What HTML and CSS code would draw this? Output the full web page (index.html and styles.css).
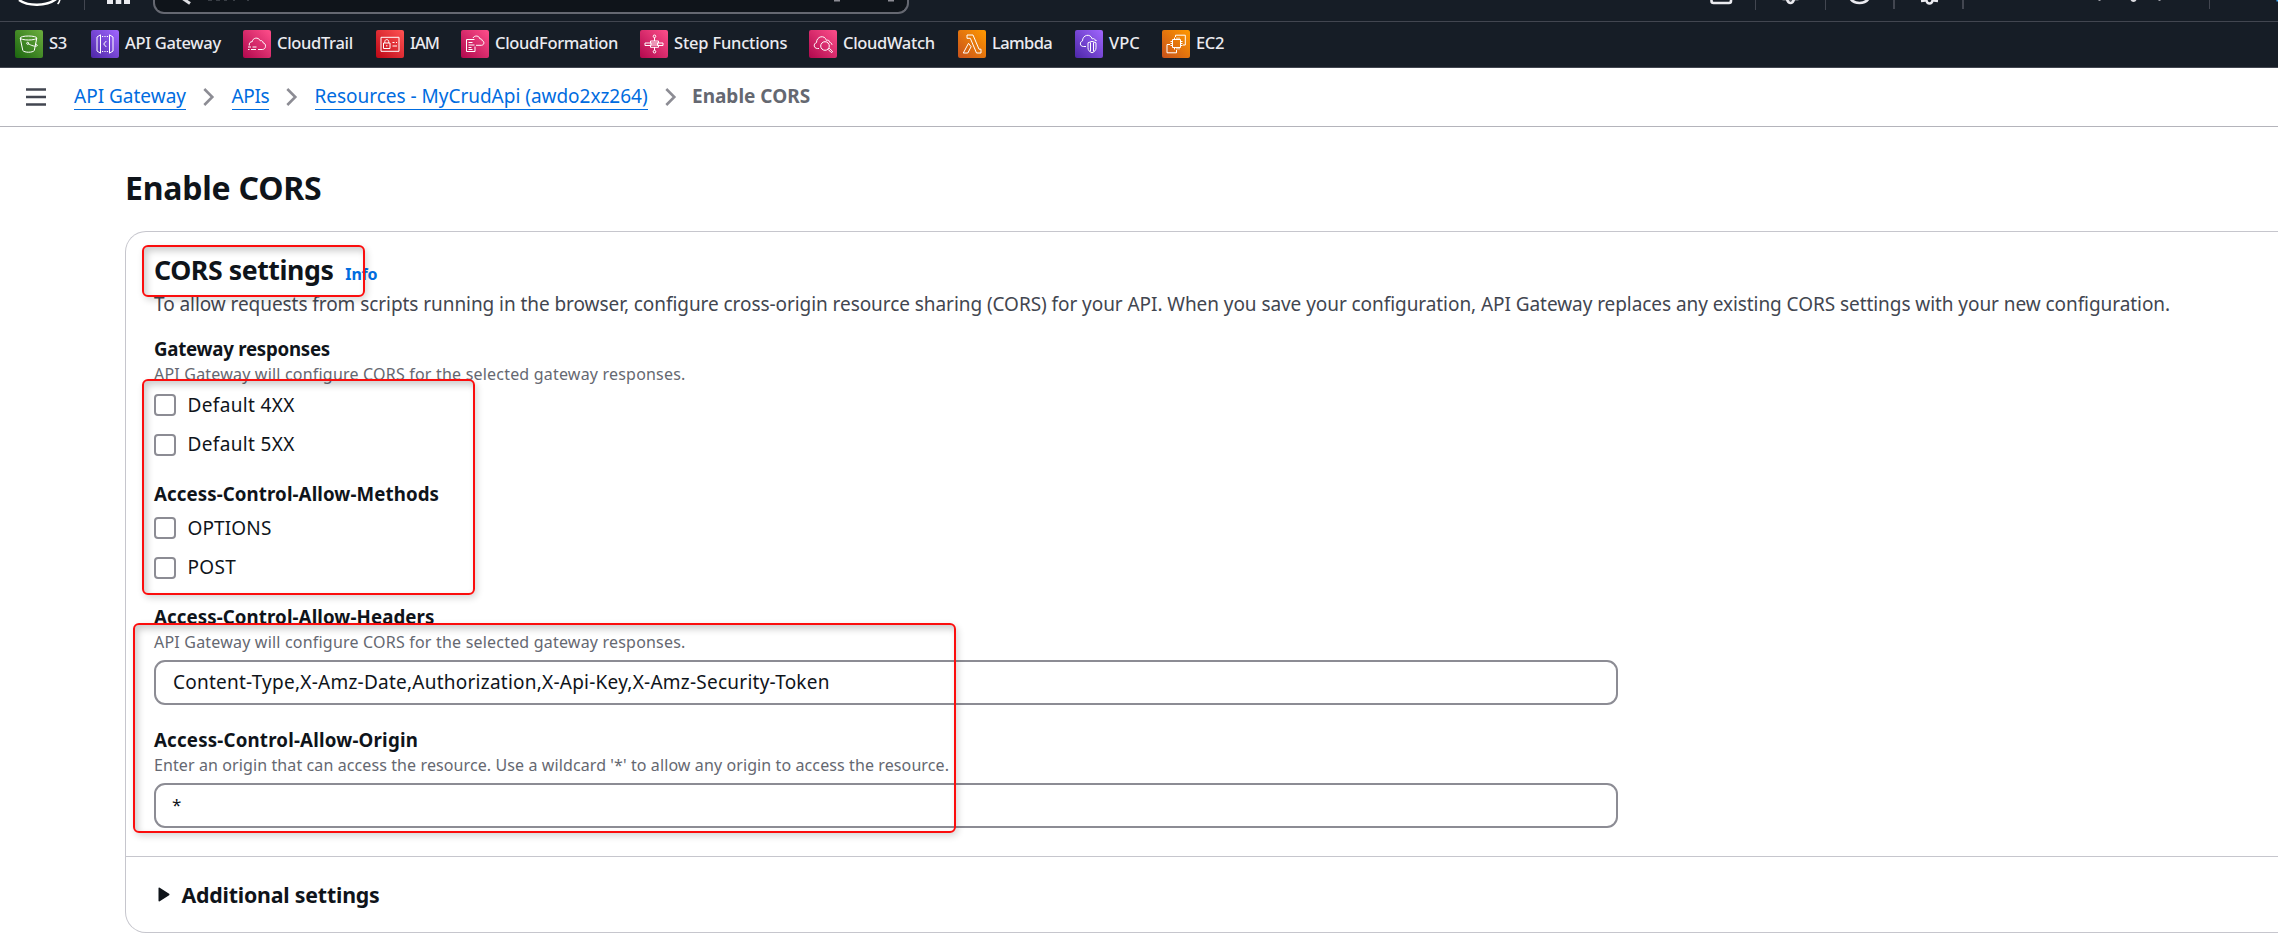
FILE: index.html
```
<!DOCTYPE html>
<html lang="en">
<head>
<meta charset="utf-8">
<title>Enable CORS - API Gateway</title>
<link rel="stylesheet" href="styles.css">
</head>
<body>
<header class="topbar">
  <div class="strip">
    <svg class="strip-left" width="153" height="21" viewBox="0 0 153 21" fill="none">
      <path d="M19 0c9 6.400 27 6.400 37-.8" stroke="#fff" stroke-width="2.400"/>
      <path d="M60 -1c-.3 2-1 3.600-2.400 5" stroke="#fff" stroke-width="1.600"/>
      <path d="M84.500 0v10" stroke="#424650"/>
      <path d="M107 0h6v4h-6zM115.700 0h5.600v4h-5.600zM124 0h6v4h-6z" fill="#ebebf0"/>
    </svg>
    <div class="search">
      <svg width="752" height="12" viewBox="0 0 752 12">
        <path d="M27-2l8 5.500" stroke="#dedee3" stroke-width="3"/>
        <path d="M53 0h4M61 0h4M69 0h3M78 0h2M92 0h2" stroke="#656871" stroke-width="1"/>
        <path d="M679 0h6v1.500h-6zM733 0h6v1.500h-6z" fill="#8c8c94"/>
      </svg>
    </div>
    <svg class="strip-right" width="578" height="21" viewBox="1700 0 578 21" fill="none">
      <path d="M1711.500-2v3q0 2 2 2h15.500q2 0 2-2v-3" stroke="#ebebf0" stroke-width="2.600"/>
      <path d="M1755.500 0v10M1825.500 0v10M2209.500 0v9" stroke="#424650"/>
      <path d="M1894 0v9M1963 0v9" stroke="#424650" stroke-width="2"/>
      <path d="M1782.500 0h16" stroke="#656871" stroke-width="1.500"/>
      <path d="M1787-1q1 4 3.500 4t3.500-4" stroke="#ebebf0" stroke-width="2.600"/>
      <path d="M1850-2q3 5 9.500 5t9.500-5" stroke="#ebebf0" stroke-width="2.600"/>
      <path d="M1921 1l4-.5 1.500 0q.5 3 3 3t3-3h1.500l4 .5" stroke="#ebebf0" stroke-width="2.400"/>
      <path d="M2098.500 0h2v1h-2zM2158.500 0h2v1h-2z" fill="#9a9ca3"/>
      <path d="M2130.500 0h6q-1 2-3 2t-3-2" fill="#dedee3"/>
      <path d="M2276.500 0h2v1.500h-2z" fill="#42b4ff"/>
    </svg>
  </div>
  <svg class="defs" width="0" height="0">
    <defs>
      <linearGradient id="green" x1="0" y1="1" x2="1" y2="0"><stop offset="0" stop-color="#1b660f"/><stop offset="1" stop-color="#6cae3e"/></linearGradient>
      <linearGradient id="purple" x1="0" y1="1" x2="1" y2="0"><stop offset="0" stop-color="#4d27a8"/><stop offset="1" stop-color="#a166ff"/></linearGradient>
      <linearGradient id="pink" x1="0" y1="1" x2="1" y2="0"><stop offset="0" stop-color="#b0084d"/><stop offset="1" stop-color="#ff4f8b"/></linearGradient>
      <linearGradient id="red" x1="0" y1="1" x2="1" y2="0"><stop offset="0" stop-color="#bd0816"/><stop offset="1" stop-color="#ff5252"/></linearGradient>
      <linearGradient id="orange" x1="0" y1="1" x2="1" y2="0"><stop offset="0" stop-color="#c8511b"/><stop offset="1" stop-color="#ff9900"/></linearGradient>
    </defs>
  </svg>
  <nav class="favorites">
    <a class="fav s3"><svg viewBox="0 0 28 28"><rect width="28" height="28" rx="2" fill="url(#green)"/><g><ellipse cx="13.500" cy="8" rx="8.300" ry="2"/><path d="M5.200 8l2.600 12.500c1.500 2.300 10 2.300 11.500 0L21.800 8M13 13.500c3 2 7.500 3.500 9.300 2.200 0-1-1-1.500-2-2"/><circle cx="12.700" cy="13.300" r="1"/></g></svg><span>S3</span></a>
    <a class="fav apigw"><svg viewBox="0 0 28 28"><rect width="28" height="28" rx="2" fill="url(#purple)"/><g><path d="M9.500 4.800L6 7v14l3.500 2.200zM18.500 4.800L22 7v14l-3.500 2.200zM15.300 11l-2.600 3 2.600 3"/><path d="M11 6.500h6.500M11 21.500h6.500" stroke-dasharray="1.200 1.200"/></g></svg><span>API Gateway</span></a>
    <a class="fav trail"><svg viewBox="0 0 28 28"><rect width="28" height="28" rx="2" fill="url(#pink)"/><g><path d="M6.300 15.500c-.5-2.500 1-3.800 3-3.900.2-3.600 5.900-5.200 8-.8 1.500-.7 2.600.5 2.800 2 3.400.5 3.300 6.700-.8 6.700H15"/><path d="M5 17h3M9.500 17h4M5 19.500h1.500M8 19.500h5"/></g></svg><span>CloudTrail</span></a>
    <a class="fav iam"><svg viewBox="0 0 28 28"><rect width="28" height="28" rx="2" fill="url(#red)"/><g><path d="M5 7.300h18v14H5zM7.500 13h6.500v5.500H7.500zM8.800 13v-1.500c0-2.500 3.900-2.500 3.900 0V13M10.800 15v1.500M16.500 12.500h2M20 12.500h1M16.500 16h4.500"/></g></svg><span>IAM</span></a>
    <a class="fav cfn"><svg viewBox="0 0 28 28"><rect width="28" height="28" rx="2" fill="url(#pink)"/><g><path d="M13.500 9.500h-8v12h8.500v-5M7.500 12.500h4M7.500 15h6M7.500 17.500h3M7.500 19.500h4"/><path d="M12 8c1.500-3 6.300-2.500 7 1 1.200-.5 2 .3 2 1.500 2.700.6 2.500 4.500-.5 4.800H15"/></g></svg><span>CloudFormation</span></a>
    <a class="fav sfn"><svg viewBox="0 0 28 28"><rect width="28" height="28" rx="2" fill="url(#pink)"/><g><circle cx="14.500" cy="6.300" r="1.300"/><circle cx="14.500" cy="21.700" r="1.300"/><path d="M14.500 7.600V11M14.500 17v3.400M10.500 11h8v2h-8zM5 13h6v2.500H5zM17.500 13h5.500v2.500h-5.500zM10.500 15h8v2.300h-8z"/></g></svg><span>Step Functions</span></a>
    <a class="fav watch"><svg viewBox="0 0 28 28"><rect width="28" height="28" rx="2" fill="url(#pink)"/><g><path d="M10 18.500H8.500c-4 0-4.300-5-1-5.900 0-6.300 8-8.300 10-2.200 1.800-.8 3 .2 3 1.800 1.500.4 2.400 1.300 2.500 2.600"/><circle cx="16" cy="16" r="4.300"/><path d="M19 19.300l3 3c1 .6 1.900-.5 1.200-1.300l-3-2.800"/></g></svg><span>CloudWatch</span></a>
    <a class="fav lambda"><svg viewBox="0 0 28 28"><rect width="28" height="28" rx="2" fill="url(#orange)"/><g><path d="M9 5h6l6 14.200h2V23h-4.500L12.300 8.300H9zM10.500 13.300L5.300 23h4.500l3.300-6.300z"/></g></svg><span>Lambda</span></a>
    <a class="fav vpc"><svg viewBox="0 0 28 28"><rect width="28" height="28" rx="2" fill="url(#purple)"/><g><path d="M11 16.500H8.500c-4 0-4-4.800-1-5.600 0-6 7.800-8 9.700-2 1.800-.8 3 .2 3 1.700h1.500"/><path d="M13 12.800l4-1.500 4 1.500v5c0 2.500-1.500 4-4 5-2.500-1-4-2.500-4-5zM15.500 12.500v9M18.500 12.500v9"/></g></svg><span>VPC</span></a>
    <a class="fav ec2"><svg viewBox="0 0 28 28"><rect width="28" height="28" rx="2" fill="url(#orange)"/><g><path d="M10.500 9.500h8v8h-8z"/><path d="M12.500 7.500v2M15 7.500v2M17 7.500v2M12.500 17.500v2M15 17.500v2M17 17.500v2M8.500 11.500h2M8.500 13.500h2M8.500 15.500h2M18.500 11.500h2M18.500 13.500h2M18.500 15.500h2"/><path d="M13.500 7V5.200h9.800v9.800H21M8 14.500H5v8.300h9.500V20"/></g></svg><span>EC2</span></a>
  </nav>
</header>
<div class="crumbbar">
  <svg class="burger" width="20" height="18" viewBox="0 0 20 18"><path d="M0 1.500h20M0 9h20M0 16.500h20" stroke="#424650" stroke-width="2.600"/></svg>
  <nav class="crumbs">
    <a class="c1"><span>API Gateway</span></a>
    <svg width="12" height="18" viewBox="0 0 12 18"><path d="M1.300 1l8 8-8 8"/></svg>
    <a class="c2"><span>APIs</span></a>
    <svg width="12" height="18" viewBox="0 0 12 18"><path d="M1.300 1l8 8-8 8"/></svg>
    <a class="c3"><span>Resources - MyCrudApi (awdo2xz264)</span></a>
    <svg width="12" height="18" viewBox="0 0 12 18"><path d="M1.300 1l8 8-8 8"/></svg>
    <strong>Enable CORS</strong>
  </nav>
</div>
<main>
  <h1>Enable CORS</h1>
  <section class="card">
    <div class="card-body">
      <div class="heading"><h2>CORS settings</h2><a class="info">Info</a></div>
      <p class="desc">To allow requests from scripts running in the browser, configure cross-origin resource sharing (CORS) for your API. When you save your configuration, API Gateway replaces any existing CORS settings with your new configuration.</p>
      <div class="field first">
        <div class="label l-gateway">Gateway responses</div>
        <div class="hint">API Gateway will configure CORS for the selected gateway responses.</div>
        <div class="checks spaced">
          <label class="check"><i></i><span>Default 4XX</span></label>
          <label class="check"><i></i><span>Default 5XX</span></label>
        </div>
      </div>
      <div class="field">
        <div class="label">Access-Control-Allow-Methods</div>
        <div class="checks">
          <label class="check"><i></i><span class="caps">OPTIONS</span></label>
          <label class="check"><i></i><span>POST</span></label>
        </div>
      </div>
      <div class="field">
        <div class="label">Access-Control-Allow-Headers</div>
        <div class="hint">API Gateway will configure CORS for the selected gateway responses.</div>
        <div class="input">Content-Type,X-Amz-Date,Authorization,X-Api-Key,X-Amz-Security-Token</div>
      </div>
      <div class="field">
        <div class="label l-origin">Access-Control-Allow-Origin</div>
        <div class="hint h-origin">Enter an origin that can access the resource. Use a wildcard '*' to allow any origin to access the resource.</div>
        <div class="input star">*</div>
      </div>
    </div>
    <div class="additional">
      <svg width="12" height="15" viewBox="0 0 12 15"><path d="M1.300 1.300v12.400l9.400-6.200z" fill="#0f141a" stroke="#0f141a" stroke-width="1.600" stroke-linejoin="round"/></svg>
      <span>Additional settings</span>
    </div>
  </section>
</main>
<div class="mark mark-title"></div>
<div class="mark mark-methods"></div>
<div class="mark mark-inputs"></div>
</body>
</html>
```

FILE: styles.css
```
* { box-sizing: border-box; }
body {
  margin: 0;
  width: 2278px;
  height: 943px;
  position: relative;
  overflow: hidden;
  background: #fff;
  color: #0f141a;
  font: 19px/28px "Noto Sans", "Open Sans", sans-serif;
  white-space: nowrap;
}
h1, h2, p { margin: 0; }
svg { display: block; flex: none; }
.defs { position: absolute; }

.topbar { height: 68px; background: #161d26; border-bottom: 1px solid #424650; }
.strip { display: flex; height: 22px; border-bottom: 1px solid #424650; }
.search {
  width: 756px;
  height: 14px;
  border: 2px solid #656871;
  border-top: 0;
  border-radius: 0 0 11px 11px;
  background: #0f141a;
}
.strip-right { margin-left: auto; }
.favorites { display: flex; gap: 22px; padding: 8px 15px; }
.fav {
  display: flex;
  gap: 6px;
  color: #ebebf0;
  font-size: 16.5px;
  font-weight: 500;
  line-height: 28px;
  letter-spacing: -0.32px;
}
.fav svg { width: 28px; height: 28px; }
.fav g { fill: none; stroke: #fff; stroke-width: 1; }
.fav span { height: 28px; margin-top: -1px; }
.s3 span { width: 20px; }
.apigw span { width: 96px; }
.trail span { width: 77px; }
.iam span { width: 29px; letter-spacing: -0.9px; }
.cfn span { width: 123px; }
.sfn span { width: 113px; letter-spacing: -0.2px; }
.watch span { width: 93px; }
.lambda span { width: 61px; letter-spacing: -0.6px; }
.vpc span { width: 31px; letter-spacing: 0; }
.ec2 span { width: 29px; }

.crumbbar {
  display: flex;
  align-items: center;
  height: 59px;
  padding-left: 26px;
  border-bottom: 1px solid #b4b4bb;
}
.crumbs { display: flex; align-items: center; margin-left: 28px; }
.crumbs a { color: #006ce0; height: 25px; border-bottom: 1px solid #006ce0; }
.crumbs a span { display: block; line-height: 24px; height: 24px; margin-top: -1px; }
.crumbs svg { margin: 0 16.5px 0 17px; fill: none; stroke: #8c8c94; stroke-width: 2.6; }
.crumbs strong { color: #656871; line-height: 24px; height: 26px; margin-left: -1px; }
.c1 { width: 112px; }
.c2 { width: 37.5px; letter-spacing: -0.35px; }
.c3 { width: 333px; letter-spacing: -0.02px; }

main { padding: 41px 0 0 125px; }
h1 { font-size: 32px; line-height: 40px; letter-spacing: -0.22px; }
.card {
  margin-top: 23px;
  border: 1px solid #c6c6cd;
  border-right: 0;
  border-radius: 21px 0 0 21px;
}
.card-body { padding: 22px 0 28px 28px; }
.heading { display: flex; gap: 12px; align-items: baseline; height: 32px; }
h2 { font-size: 26.7px; line-height: 32px; letter-spacing: -0.43px; }
.info { color: #006ce0; font-size: 16px; font-weight: 700; letter-spacing: -0.2px; }
.desc { margin-top: 4px; color: #424650; letter-spacing: -0.063px; }
.field { margin-top: 21px; }
.field.first { margin-top: 17px; }
.label { font-size: 18.7px; font-weight: 700; letter-spacing: 0.09px; }
.l-gateway { letter-spacing: -0.26px; }
.l-origin { letter-spacing: 0.19px; }
.hint { color: #656871; font-size: 16px; line-height: 22px; letter-spacing: 0.2px; }
.h-origin { letter-spacing: 0.103px; }
.checks { display: grid; gap: 12px; margin-top: 6px; }
.check { display: flex; align-items: center; gap: 11.5px; height: 28px; letter-spacing: 0.35px; }
.check i { width: 22px; height: 22px; border: 2px solid #8c8c94; border-radius: 4px; }
.check + .check span { margin-top: -2px; }
.caps { letter-spacing: 0.13px; }
.input {
  width: 1464px;
  height: 45px;
  margin-top: 7px;
  padding-left: 17px;
  border: 2px solid #8c8c94;
  border-radius: 11px;
  line-height: 40px;
  letter-spacing: 0.24px;
}
.star { padding-left: 16px; font-size: 17px; }
.additional {
  display: flex;
  align-items: center;
  gap: 11.5px;
  height: 76px;
  padding-left: 32px;
  border-top: 1px solid #c6c6cd;
  font-size: 21.3px;
  font-weight: 700;
  letter-spacing: -0.19px;
}

/* Highlight frames laid over the form */
.mark {
  position: absolute;
  border: 2px solid #fb0d0d;
  border-radius: 6px;
  box-shadow: 2px 3px 7px rgba(0, 0, 0, .16), inset 3px 4px 7px rgba(0, 0, 0, .2);
}
.mark-title { left: 142px; top: 245px; width: 223px; height: 52px; }
.mark-methods { left: 142px; top: 379px; width: 333px; height: 216px; }
.mark-inputs { left: 133px; top: 623px; width: 823px; height: 210px; }
```
